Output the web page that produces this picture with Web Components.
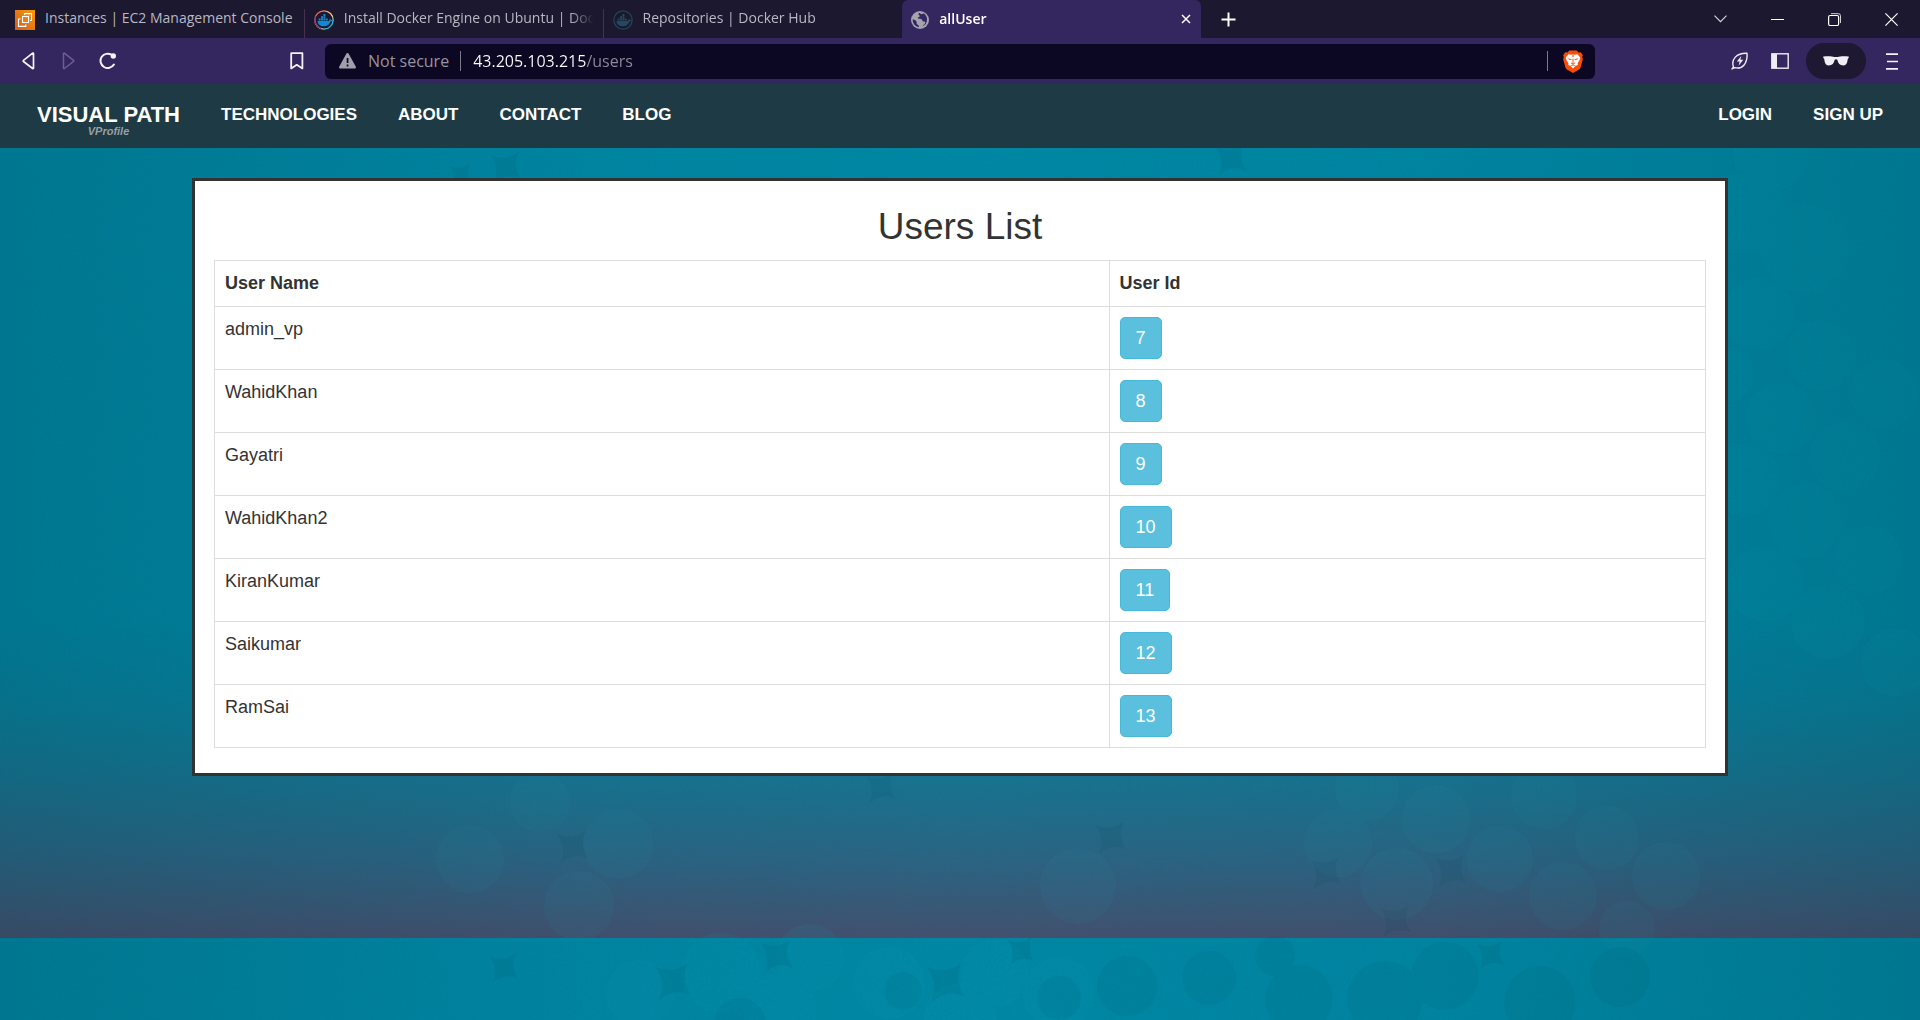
<!DOCTYPE html>
<html lang="en">
<head>
<meta charset="utf-8">
<title>allUser</title>
<style>
html,body{height:100%;margin:0}
body{display:flex;flex-direction:column;font-family:"Liberation Sans",Arial,sans-serif;color:#333;background:#00809c}
</style>
</head>
<body>
<browser-chrome>
  <tab-strip>
    <browser-tab><app-icon name="ec2"></app-icon>Instances | EC2 Management Console</browser-tab>
    <browser-tab><app-icon name="docker"></app-icon>Install Docker Engine on Ubuntu | Docker Docs</browser-tab>
    <browser-tab><app-icon name="docker-dim"></app-icon>Repositories | Docker Hub</browser-tab>
    <browser-tab active><app-icon name="globe"></app-icon>allUser</browser-tab>
  </tab-strip>
  <browser-toolbar></browser-toolbar>
</browser-chrome>
<site-page>
  <site-nav slot="nav"></site-nav>
  <user-list heading="Users List"></user-list>
</site-page>

<script>
const docker = (whale) => `<g fill="${whale}"><path d="M3.500 11h11.200c.8 0 1.100-1 .8-1.900.9-.2 1.300.4 1.500 1 .6-.1 1.100 0 1.400.3-.4.8-1.200 1.100-2 1.100-.9 3.200-3.200 4.800-6.600 4.800-3.600 0-6-1.700-6.300-5.300z"/><path d="M4.600 8.600h2v1.900h-2zM7 8.600h2v1.900H7zM9.400 8.600h2v1.900h-2zM11.800 8.600h1.900v1.900h-1.900zM7 6.300h2v1.900H7zM9.400 6.300h2v1.900h-2zM9.400 4h2v1.900h-2z"/></g>`;
const ICONS = {
  'ec2': [20,20,`<defs><linearGradient id="g" x1="0" y1="1" x2="1" y2="0"><stop stop-color="#cf5b1b"/><stop offset="1" stop-color="#fb9a0b"/></linearGradient></defs><path fill="url(#g)" d="M0 0h20v20H0z"/><g fill="none" stroke="#fff" stroke-width="1.100"><rect x="7.500" y="6.500" width="6" height="6"/><path d="M9.500 5V3.600h7V10.500h-1.500M5.500 9H3.500v7.400h7.300v-2"/></g>`],
  'docker': [20,20,`<defs><linearGradient id="g" x1="0" y1="0" x2="1" y2="1"><stop stop-color="#d6336c"/><stop offset=".35" stop-color="#f5a04a"/><stop offset=".6" stop-color="#fbd38a"/><stop offset=".8" stop-color="#2fc4d8"/><stop offset="1" stop-color="#1d4f63"/></linearGradient></defs><circle cx="10" cy="10" r="9.200" fill="none" stroke="url(#g)" stroke-width="1.300"/><path d="M1.500 6.500A9.200 9.200 0 0 0 7 18.700" fill="none" stroke="#713a78" stroke-width="1.300"/>${docker('#1289d8')}`],
  'docker-dim': [20,20,`<circle cx="10" cy="10" r="9.200" fill="none" stroke="#214356" stroke-width="1.300"/>${docker('#24495e')}`],
  'globe': [18,18,`<circle cx="9" cy="9" r="9" fill="#a4a3ae"/><path fill="#34265f" d="M8.500 1.800c-1.500.4-1.200 2-.3 2.400 1.200.5.300 1.800-.9 2.100-.9.300-.4 1.500.6 1.500 1.500 0 3.300.3 3.500 1.800.1 1 1 .9 1.900.9.900 0 1.200.9.700 1.800-.8 1.500-1.700 2.400-3 3.200a7.300 7.300 0 0 0 1.300-13.300c-.6 1.200-2.500 1.400-3.800-.4zM1.700 8.300a7.300 7.300 0 0 0 6.200 8c.3-1.200-.3-2.200-1.500-2.800-.8-.4-.8-1.500-.8-2.300 0-1.300-1.800-2.500-3.900-2.900z"/>`],
  'x': [10,10,`<path d="M1 1l8 8M9 1L1 9" fill="none" stroke="#fff" stroke-width="1.500"/>`],
  'plus': [15,15,`<path d="M7.500.5v14M.5 7.500h14" stroke="#fff" stroke-width="2"/>`],
  'chevron': [13,8,`<path d="M.5.700l6 6 6-6" fill="none" stroke="#dcdbe2" stroke-width="1.100"/>`],
  'min': [13,1,`<path d="M0 .5h13" stroke="#fff"/>`],
  'restore': [13,13,`<rect x=".6" y="2.500" width="10" height="10" rx="1.500" fill="none" stroke="#fff" stroke-width="1.200"/><path d="M3 .7h7.500a2 2 0 0 1 2 2V10" fill="none" stroke="#d0cfd8"/>`],
  'close': [13,13,`<path d="M.4.400l12.200 12.200M12.600.400L.4 12.600" stroke="#fff" stroke-width="1.200"/>`],
  'back': [13,18,`<path d="M11.500 1.500v14.600a.6.600 0 0 1-.9.400L1.500 9.500a.8.800 0 0 1 0-1.200L10.600 1.200a.6.600 0 0 1 .9.300z" fill="none" stroke="#f4f2fa" stroke-width="1.700"/>`],
  'forward': [13,18,`<path d="M1.500 1.500v14.600a.6.600 0 0 0 .9.400l9.100-7a.8.800 0 0 0 0-1.200L2.400 1.200a.6.600 0 0 0-.9.300z" fill="none" stroke="#6d6090" stroke-width="1.500"/>`],
  'reload': [18,18,`<path d="M14.900 12.600A7.200 7.200 0 1 1 12.500 2.700" fill="none" stroke="#f4f2fa" stroke-width="2" stroke-linecap="round"/><circle cx="14.300" cy="4" r="2.700" fill="#f4f2fa"/>`],
  'bookmark': [14,18,`<path d="M1.200 1.200h11.200v15.200L6.800 12.800l-5.600 3.600z" fill="none" stroke="#f4f2fa" stroke-width="1.800" stroke-linejoin="round"/>`],
  'warn': [17,16,`<path d="M7.300.8a1.400 1.400 0 0 1 2.400 0l7 12.800a1.300 1.300 0 0 1-1.200 2H1.500a1.300 1.300 0 0 1-1.200-2z" fill="#a19fac"/><path d="M7.700 5h1.700v5H7.700zM7.700 11.600h1.700v1.800H7.700z" fill="#0c0722"/>`],
  'brave': [20,23,`<path fill="#fb4d06" d="M6.300.4h7.400l1.800 2 2.300-.1 2 3-.6 1.800.6 2.300-2.200 7.800a4 4 0 0 1-1.500 2.200L10 23l-6.100-3.600a4 4 0 0 1-1.500-2.200L.2 9.400l.6-2.300L.2 5.300l2-3 2.300.1z"/><path fill="#fff" d="M5.500 4.300l3 .5L10 4.500l1.500.3 3-.5 2.700 3.300-.6 2.500-2 3.200.3 1.500-2.700 1.500L10 18.600l-2.200-2.300-2.700-1.500.3-1.500-2-3.200-.6-2.500z"/><path fill="#fb4d06" d="M5 8.300l3.600.9-.3.900-2.300-.4zM15 8.300l-3.600.9.300.9 2.300-.4zM9.300 8.800h.5v4h-.5zM10.200 8.800h.5v4h-.5zM7.800 12.200l2.200 1.300 2.200-1.300-.5 1.500-1.700.8-1.700-.8zM7.300 15.600l2.700-1 2.700 1-.6.5-2.100-.7-2.100.7zM9.200 5.300h1.600l-.3 1.800h-1z"/>`],
  'leaf': [18,18,`<path d="M1 16.900l1.500-2C-.2 7.500 5.500.8 16 1.200c.8 10-4.500 16.500-12.300 14.400L1 16.900z" fill="none" stroke="#eeecf4" stroke-width="1.400" stroke-linejoin="round"/><path d="M10.300 3.900L5.800 9.500h2.800l-1 4.200 4.700-5.900H9.400z" fill="#eeecf4"/>`],
  'sidebar': [18,16,`<rect x=".8" y=".8" width="16.400" height="14.400" fill="none" stroke="#eeecf4" stroke-width="1.400"/><path d="M1 1h5v14H1z" fill="#eeecf4"/>`],
  'glasses': [26,10,`<path d="M.3.600C4 .1 8.500-.1 11.300 1h3.400c2.800-1.100 7.300-.9 11-.4v1.500l-.9.600c-.4 3.500-1.300 6.700-4.500 6.700-3.600 0-5.200-1.800-5.900-5.300-.4-1.300-2.400-1.300-2.800 0-.7 3.500-2.300 5.300-5.900 5.300-3.200 0-4.100-3.200-4.500-6.700L.3 2.100z" fill="#f1eff6"/>`],
  'menu': [12,17,`<path d="M0 1.200h12M1 8.500h11M0 15.800h12" stroke="#f4f2fa" stroke-width="1.700"/>`]
};

function define(name, html, setup) {
  const template = document.createElement('template');
  template.innerHTML = html;
  customElements.define(name, class extends HTMLElement {
    constructor() {
      super();
      this.attachShadow({ mode: 'open' }).append(template.content.cloneNode(true));
    }
    connectedCallback() { if (setup) setup.call(this, this.shadowRoot); }
  });
}

define('app-icon', `<style>:host{display:inline-flex;flex:none}svg{display:block}</style>`, function (root) {
  const [w, h, art] = ICONS[this.getAttribute('name')];
  root.innerHTML += `<svg width="${w}" height="${h}" viewBox="0 0 ${w} ${h}" aria-hidden="true">${art}</svg>`;
});

define('browser-chrome', `<style>
:host{display:block;flex:none;background:#34265f;font-family:"Open Sans","Noto Sans",sans-serif}
</style><slot></slot>`);

define('tab-strip', `<style>
:host{display:flex;height:38px;padding-left:6px;background:#1b182f;align-items:stretch}
.tabs{display:flex;flex:0 1 1195px;min-width:0}
button{border:0;background:none;padding:0;display:flex;align-items:center;justify-content:center}
.new{width:54px}
.window{display:flex;margin-left:auto}
.window button{width:57px}
</style>
<div class="tabs"><slot></slot></div>
<button class="new" aria-label="New tab"><app-icon name="plus"></app-icon></button>
<div class="window">
<button aria-label="Search tabs"><app-icon name="chevron"></app-icon></button>
<button aria-label="Minimize"><app-icon name="min"></app-icon></button>
<button aria-label="Restore"><app-icon name="restore"></app-icon></button>
<button aria-label="Close"><app-icon name="close"></app-icon></button>
</div>`);

define('browser-tab', `<style>
:host{display:flex;flex:1 1 0;min-width:0;box-sizing:border-box;align-items:center;padding:0 10px 0 9px;color:#b9b7c3;font-size:14px;line-height:20px;background:linear-gradient(#46324f,#46324f) right 100%/1px 29px no-repeat}
:host(:nth-child(3)){background:none}
:host([active]){background:#34265f;color:#fff;border-radius:6px 6px 0 0;font-weight:600}
.title{flex:1;min-width:0;overflow:hidden;white-space:nowrap;-webkit-mask-image:linear-gradient(90deg,#000 calc(100% - 24px),transparent);mask-image:linear-gradient(90deg,#000 calc(100% - 24px),transparent)}
:host(:first-child) .title{-webkit-mask-image:none;mask-image:none}
::slotted(app-icon){vertical-align:middle;margin-right:10px}
button{display:none;border:0;background:none;padding:0}
:host([active]) button{display:flex}
</style>
<span class="title"><slot></slot></span><button aria-label="Close tab"><app-icon name="x"></app-icon></button>`);

define('browser-toolbar', `<style>
:host{display:grid;grid-template-columns:325px minmax(0,1fr) 325px;height:46px;align-items:center}
.left,.right{display:flex;align-items:center}
button{border:0;background:none;padding:0;display:flex;align-items:center;justify-content:center;width:40px;height:36px}
.left{padding:0 8px}
.left .mark{margin-left:auto}
.right{justify-content:flex-end;padding-right:8px}
.pill{width:60px;border-radius:18px;background:#1e1833;margin:0 6px}
.box{display:flex;align-items:center;height:35px;border-radius:6px;background:#0c0722;padding:0 12px 0 14px;font-size:16px;color:#96949f}
label{padding:0 11px 0 12px}
.bar{width:1px;height:20px;background:#7d7a88}
input{flex:1;min-width:0;border:0;outline:0;padding:0;margin:0 0 0 12px;height:24px;font:inherit;color:transparent;background:linear-gradient(90deg,#fff 113px,#8d8b99 113px);-webkit-background-clip:text;background-clip:text}
.shield{width:20px;margin-left:15px}
</style>
<div class="left">
<button aria-label="Back"><app-icon name="back"></app-icon></button>
<button aria-label="Forward"><app-icon name="forward"></app-icon></button>
<button aria-label="Reload"><app-icon name="reload"></app-icon></button>
<button class="mark" aria-label="Bookmark"><app-icon name="bookmark"></app-icon></button>
</div>
<div class="box"><app-icon name="warn"></app-icon><label for="url">Not secure</label><span class="bar"></span>
<input id="url" type="text" value="43.205.103.215/users"><span class="bar"></span>
<button class="shield" aria-label="Shields"><app-icon name="brave"></app-icon></button></div>
<div class="right">
<button aria-label="Performance"><app-icon name="leaf"></app-icon></button>
<button aria-label="Sidebar"><app-icon name="sidebar"></app-icon></button>
<button class="pill" aria-label="Private window"><app-icon name="glasses"></app-icon></button>
<button aria-label="Menu"><app-icon name="menu"></app-icon></button>
</div>`);

define('site-page', `<style>
:host{display:flex;flex-direction:column;flex:1;position:relative;overflow:hidden}
page-backdrop{position:absolute;inset:0}
::slotted(*){position:relative}
</style><page-backdrop></page-backdrop><slot name="nav"></slot><slot></slot>`);

define('page-backdrop', `<style>:host{display:block}svg{display:block;width:100%;height:100%}</style>`, function (root) {
  const discs = (list) => list.map(([x, y, r]) => `<circle cx="${x}" cy="${y}" r="${r}"/>`).join('');
  const light = [[1821,271,35],[1781,334,35],[1884,310,34],[1845,372,35],[1805,437,37],[1868,476,34],[1765,500,38],[1828,538,37],[1758,230,36],[1745,396,36],[1728,291,26],[1745,129,40],[1805,165,44],[1771,69,38],[1895,578,34]];
  const dusk = [[618,760,35],[579,822,35],[1436,735,34],[1338,759,34],[1397,800,36],[1500,775,33],[1367,705,32],[1544,712,33],[1607,754,32],[1563,812,34],[1666,792,34],[1078,802,38],[1627,845,28],[470,775,34],[540,718,30]];
  const lower = [[721,889,40],[810,874,34],[889,899,36],[995,889,34],[1059,909,36],[640,910,34],[780,925,36],[960,935,36]];
  const shade = [[903,907,19],[1059,914,22],[1127,902,30],[1209,894,27],[1299,915,34],[1385,915,38],[1445,892,34],[1540,918,36],[1620,893,30],[740,940,26],[1275,872,20]];
  const cusps = [[503,885,13],[672,899,16],[776,873,14],[945,900,17],[1490,872,12],[572,764,14],[1110,755,14],[1020,868,12],[880,705,13],[1395,838,14],[1325,790,14],[1450,788,14],[505,85,14],[460,92,10],[1230,76,14]];
  const gaps = cusps.map(([x, y, s]) => `<path d="M${x-s} ${y-s}q${s} ${s/2} ${s*2} ${-s/4}q${-s/2} ${s} ${s/6} ${s*2}q${-s} ${-s/2} ${-s*2} ${s/3}q${s/2} ${-s} ${-s/6} ${-s*2}z"/>`).join('');
  root.innerHTML += `<svg viewBox="0 0 1920 936" preserveAspectRatio="xMidYMin slice" aria-hidden="true">
<defs>
<linearGradient id="fall" x1="0" y1="0" x2="0" y2="1"><stop offset=".62" stop-color="#40506e" stop-opacity="0"/><stop offset=".72" stop-color="#3c5572" stop-opacity=".14"/><stop offset=".81" stop-color="#3c5572" stop-opacity=".38"/><stop offset=".9" stop-color="#3e5575" stop-opacity=".68"/><stop offset="1" stop-color="#44506e"/></linearGradient>
<linearGradient id="side"><stop stop-color="#00252e" stop-opacity=".16"/><stop offset=".3" stop-color="#00252e" stop-opacity=".03"/><stop offset=".5" stop-color="#00252e" stop-opacity="0"/><stop offset=".75" stop-color="#00252e" stop-opacity=".03"/><stop offset="1" stop-color="#00252e" stop-opacity=".16"/></linearGradient>
<filter id="grain" x="0" y="0" width="100%" height="100%"><feTurbulence type="fractalNoise" baseFrequency=".35" numOctaves="2" seed="4"/><feColorMatrix values="0 0 0 0 0  0 0 0 0 .15  0 0 0 0 .2  .5 0 0 0 -.17"/></filter>
</defs>
<path fill="#0087a4" d="M0 0h1920v936H0z"/>
<path fill="url(#fall)" d="M0 0h1920v854H0z"/>
<g fill="#0b9ab0" opacity=".15">${discs(light)}</g>
<g fill="#2a92a8" opacity=".09">${discs(dusk)}</g>
<g fill="#14a2b8" opacity=".1">${discs(lower)}</g>
<g fill="#004d60" opacity=".07">${discs(shade)}</g>
<g fill="#003f50" opacity=".09">${gaps}</g>
<path fill="url(#side)" d="M0 0h1920v936H0z"/>
<path filter="url(#grain)" opacity=".3" d="M0 0h1920v936H0z"/>
</svg>`;
});

define('site-nav', `<style>
:host{display:block;flex:none;background:#1e3a45}
nav{display:flex;align-items:flex-start;gap:41px;height:45px;padding:19px 37px 0}
a{color:#fff;text-decoration:none;font-weight:700;font-size:17px;line-height:24px;text-transform:uppercase}
.brand{display:flex;flex-direction:column;align-items:center;font-size:22px}
.brand em{font-size:11px;line-height:8px;color:#9a9fa3;text-transform:none}
.login{margin-left:auto}
</style><nav>
<a class="brand" href="#">VISUAL PATH<em>VProfile</em></a>
<a href="#">TECHNOLOGIES</a><a href="#">ABOUT</a><a href="#">CONTACT</a><a href="#">BLOG</a>
<a class="login" href="#">LOGIN</a><a href="#">SIGN UP</a></nav>`);

define('user-list', `<style>
:host{display:block;box-sizing:border-box;width:80%;margin:30px auto 0;padding:25px 19px;border:3px solid #333;background:#fff;font-size:18px;line-height:25px}
h1{margin:0 0 12px;font-size:37px;line-height:42px;font-weight:400;text-align:center}
table{width:100%;border-collapse:collapse;table-layout:fixed}
th,td{border:1px solid #ddd;padding:10px;text-align:left;vertical-align:top}
th{box-sizing:border-box}
th:first-child{width:60%}
button{display:block;height:42px;padding:0 15px;border:1px solid #46b8da;border-radius:5px;background:#5bc0de;color:#fff;font:inherit}
</style><h1></h1><table><thead><tr><th>User Name</th><th>User Id</th></tr></thead><tbody></tbody></table>`, function (root) {
  const users = [['admin_vp',7],['WahidKhan',8],['Gayatri',9],['WahidKhan2',10],['KiranKumar',11],['Saikumar',12],['RamSai',13]];
  root.querySelector('h1').textContent = this.getAttribute('heading');
  root.querySelector('tbody').innerHTML = users.map(([name, id]) => `<tr><td>${name}</td><td><button>${id}</button></td></tr>`).join('');
});
</script>
</body>
</html>
